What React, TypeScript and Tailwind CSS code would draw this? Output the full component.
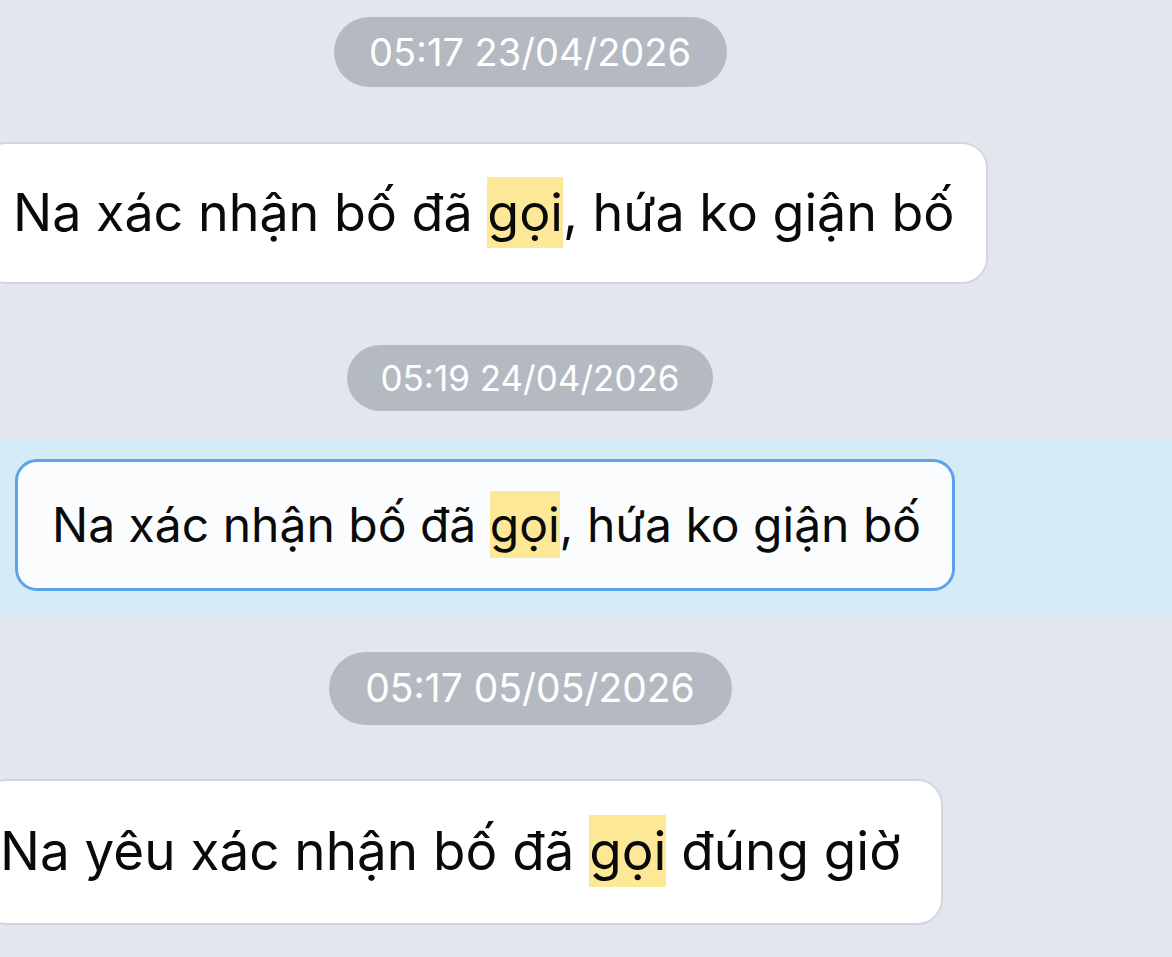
import React from "react";

const Pill = ({ text, className }: { text: string; className: string }) => (
  <div className="flex w-[1060px] justify-center">
    <div
      className={`flex items-center justify-center rounded-full bg-[#b5bac2] text-white ${className}`}
    >
      {text}
    </div>
  </div>
);

const Hl = ({ children }: { children: React.ReactNode }) => (
  <span className="bg-[#fce896] py-[4px]">{children}</span>
);

export default function App() {
  return (
    <div className="min-h-[957px] w-[1172px] overflow-hidden bg-[#e2e7ef] pt-[17px] font-['Inter','Noto_Sans',sans-serif] text-[#0a0a0a]">
      <Pill text="05:17 23/04/2026" className="h-[70px] w-[393px] text-[38px]" />

      <div className="mt-[55px] -ml-[20px] flex h-[142px] w-[1008px] items-center rounded-[26px] border-2 border-[#d3d7dd] bg-white pl-[31px] text-[52px]">
        <p className="whitespace-nowrap">
          Na xác nhận bố đã <Hl>gọi</Hl>, hứa ko giận bố
        </p>
      </div>

      <div className="mt-[61px]">
        <Pill text="05:19 24/04/2026" className="h-[66px] w-[366px] text-[35px]" />
      </div>

      <div className="mt-[29px] bg-[#d6ebf8] pt-[19px] pb-[26px]">
        <div className="ml-[15px] flex h-[132px] w-[940px] items-center rounded-[22px] border-[3px] border-[#5ba4ec] bg-[#fbfcfd] pl-[34px] text-[48px]">
          <p className="whitespace-nowrap">
            Na xác nhận bố đã <Hl>gọi</Hl>, hứa ko giận bố
          </p>
        </div>
      </div>

      <div className="mt-[35px]">
        <Pill text="05:17 05/05/2026" className="h-[73px] w-[403px] text-[39px]" />
      </div>

      <div className="mt-[54px] -ml-[20px] flex h-[146px] w-[963px] items-center rounded-[26px] border-2 border-[#d3d7dd] bg-white pl-[18px] text-[53px]">
        <p className="whitespace-nowrap">
          Na yêu xác nhận bố đã <Hl>gọi</Hl> đúng giờ
        </p>
      </div>
    </div>
  );
}
